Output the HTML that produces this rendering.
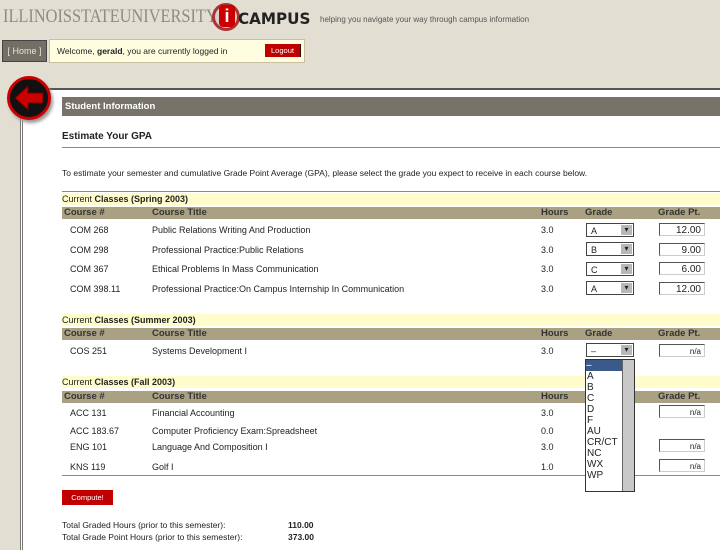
<!DOCTYPE html>
<html><head><style>
body{margin:0;width:720px;height:540px;overflow:hidden;background:#e3ded2;font-family:"Liberation Sans",sans-serif;font-size:9px;color:#222;position:relative}
.a{position:absolute;white-space:nowrap}
.yl{position:absolute;left:62px;width:658px;height:12px;background:#fffccc;font-size:9px;line-height:12px}
.gh{position:absolute;left:62px;width:658px;height:12px;background:#aaa183;font-weight:bold;font-size:9.5px;line-height:12px;color:#333}
.sel{position:absolute;left:586px;width:48px;height:14px;border:1px solid #444;background:#fff;font-size:9px;line-height:14px;box-sizing:border-box;padding-left:4px}
.sel:after{content:"▾";position:absolute;right:1px;top:1px;width:11px;height:10px;background:#b8b8b8;font-size:8px;line-height:10px;text-align:center}
.gp{position:absolute;left:659px;width:46px;height:13px;border:1px solid #555;border-right-color:#ccc;border-bottom-color:#ccc;background:#fff;text-align:right;font-size:10px;line-height:13px;padding-right:3px;box-sizing:border-box}
.hr{position:absolute;left:62px;width:658px;height:1px;background:#888}
</style></head><body>
<div class="a" style="left:3px;top:6px;font-family:'Liberation Serif',serif;font-size:19px;color:#8f8b84;transform-origin:0 0;transform:scaleX(0.86)">ILLINOISSTATEUNIVERSITY</div>
<div class="a" style="left:212px;top:3px;width:28px;height:28px;border-radius:50%;border:3px solid #a33;background:#d8cfc8;box-sizing:border-box"></div>
<div class="a" style="left:219px;top:5px;width:16px;height:22px;border-radius:4px;background:#c00;color:#fff;font-weight:bold;font-size:18px;line-height:22px;text-align:center">i</div>
<div class="a" style="left:238px;top:9px;font-weight:bold;font-size:16px;color:#222;letter-spacing:0px;font-family:'DejaVu Sans',sans-serif;transform-origin:0 0;transform:scaleX(0.95)">CAMPUS</div>
<div class="a" style="left:320px;top:15px;font-size:8px;color:#555">helping you navigate your way through campus information</div>
<div class="a" style="left:2px;top:40px;width:43px;height:20px;background:#736f65;border:1px solid #444;color:#e8e4dc;font-size:9px;line-height:20px;text-align:center">[ Home ]</div>
<div class="a" style="left:49px;top:39px;width:254px;height:22px;background:#fffde0;border:1px solid #c8c0a0"></div>
<div class="a" style="left:57px;top:46px;font-size:8.5px">Welcome, <b>gerald</b>, you are currently logged in</div>
<div class="a" style="left:265px;top:44px;width:35px;height:13px;background:#c00000;color:#fff;font-size:7.5px;line-height:13px;text-align:center;border-right:1px solid #300">Logout</div>
<div class="a" style="left:20px;top:88px;width:700px;height:460px;background:#fff;border-left:3px double #777;border-top:2px solid #555"></div>
<div class="a" style="left:7px;top:76px;width:44px;height:44px;border-radius:50%;background:#111;border:3px solid #c00;box-sizing:border-box;box-shadow:2px 3px 3px #999"></div>
<svg class="a" style="left:10px;top:80px" width="40" height="36"><polygon points="5,18 18,6 18,13 33,13 33,23 18,23 18,30" fill="#c00" stroke="#600" stroke-width="1"/></svg>
<div class="a" style="left:62px;top:97px;width:658px;height:19px;background:#77736a;color:#fff;font-weight:bold;font-size:9.5px;line-height:19px;padding-left:3px;box-sizing:border-box">Student Information</div>
<div class="a" style="left:62px;top:131px;font-weight:bold;font-size:10px">Estimate Your GPA</div>
<div class="hr" style="top:147px"></div>
<div class="a" style="left:62px;top:168px;font-size:8.5px">To estimate your semester and cumulative Grade Point Average (GPA), please select the grade you expect to receive in each course below.</div>
<div class="hr" style="top:191px"></div>
<div class="yl" style="top:193px">Current <b>Classes (Spring 2003)</b></div>
<div class="gh" style="top:207px"><span class="a" style="left:2px">Course #</span><span class="a" style="left:90px">Course Title</span><span class="a" style="left:479px">Hours</span><span class="a" style="left:523px">Grade</span><span class="a" style="left:596px">Grade Pt.</span></div>
<div class="a" style="left:70px;top:225px">COM 268</div><div class="a" style="left:152px;top:225px">Public Relations Writing And Production</div><div class="a" style="left:541px;top:225px">3.0</div><div class="sel" style="top:223px">A</div><div class="gp" style="top:223px">12.00</div>
<div class="a" style="left:70px;top:245px">COM 298</div><div class="a" style="left:152px;top:245px">Professional Practice:Public Relations</div><div class="a" style="left:541px;top:245px">3.0</div><div class="sel" style="top:242px">B</div><div class="gp" style="top:243px">9.00</div>
<div class="a" style="left:70px;top:264px">COM 367</div><div class="a" style="left:152px;top:264px">Ethical Problems In Mass Communication</div><div class="a" style="left:541px;top:264px">3.0</div><div class="sel" style="top:262px">C</div><div class="gp" style="top:262px">6.00</div>
<div class="a" style="left:70px;top:284px">COM 398.11</div><div class="a" style="left:152px;top:284px">Professional Practice:On Campus Internship In Communication</div><div class="a" style="left:541px;top:284px">3.0</div><div class="sel" style="top:281px">A</div><div class="gp" style="top:282px">12.00</div>
<div class="yl" style="top:314px">Current <b>Classes (Summer 2003)</b></div>
<div class="gh" style="top:328px"><span class="a" style="left:2px">Course #</span><span class="a" style="left:90px">Course Title</span><span class="a" style="left:479px">Hours</span><span class="a" style="left:523px">Grade</span><span class="a" style="left:596px">Grade Pt.</span></div>
<div class="a" style="left:70px;top:346px">COS 251</div><div class="a" style="left:152px;top:346px">Systems Development I</div><div class="a" style="left:541px;top:346px">3.0</div><div class="sel" style="top:343px">–</div><div class="gp" style="top:344px;font-size:8px">n/a</div>
<div class="yl" style="top:376px">Current <b>Classes (Fall 2003)</b></div>
<div class="gh" style="top:391px"><span class="a" style="left:2px">Course #</span><span class="a" style="left:90px">Course Title</span><span class="a" style="left:479px">Hours</span><span class="a" style="left:596px">Grade Pt.</span></div>
<div class="a" style="left:70px;top:408px">ACC 131</div><div class="a" style="left:152px;top:408px">Financial Accounting</div><div class="a" style="left:541px;top:408px">3.0</div><div class="gp" style="top:405px;font-size:8px">n/a</div>
<div class="a" style="left:70px;top:426px">ACC 183.67</div><div class="a" style="left:152px;top:426px">Computer Proficiency Exam:Spreadsheet</div><div class="a" style="left:541px;top:426px">0.0</div>
<div class="a" style="left:70px;top:442px">ENG 101</div><div class="a" style="left:152px;top:442px">Language And Composition I</div><div class="a" style="left:541px;top:442px">3.0</div><div class="gp" style="top:439px;font-size:8px">n/a</div>
<div class="a" style="left:70px;top:462px">KNS 119</div><div class="a" style="left:152px;top:462px">Golf I</div><div class="a" style="left:541px;top:462px">1.0</div><div class="gp" style="top:459px;font-size:8px">n/a</div>
<div class="hr" style="top:475px"></div>
<div class="a" style="left:62px;top:490px;width:51px;height:15px;background:#c00000;color:#fff;font-size:7.5px;line-height:15px;text-align:center">Compute!</div>
<div class="a" style="left:62px;top:520px;font-size:8.5px">Total Graded Hours (prior to this semester):</div><div class="a" style="left:288px;top:520px;font-weight:bold;font-size:8.5px">110.00</div>
<div class="a" style="left:62px;top:532px;font-size:8.5px">Total Grade Point Hours (prior to this semester):</div><div class="a" style="left:288px;top:532px;font-weight:bold;font-size:8.5px">373.00</div>
<div class="a" style="left:585px;top:359px;width:50px;height:133px;background:#fff;border:1px solid #333;box-sizing:border-box;font-size:10px;line-height:11px">
<div style="background:#3a5a8a;color:#fff;width:37px;height:11px">–</div>
<div style="padding-left:1px">A<br>B<br>C<br>D<br>F<br>AU<br>CR/CT<br>NC<br>WX<br>WP</div>
<div class="a" style="right:0;top:0;width:11px;height:131px;background:#c8c8c8;border-left:1px solid #666"></div>
</div>
</body></html>
